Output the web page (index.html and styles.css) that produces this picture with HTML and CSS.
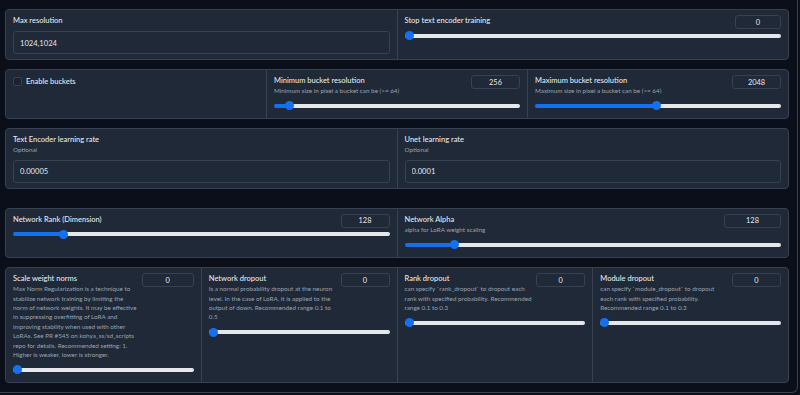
FILE: index.html
```html
<!DOCTYPE html>
<html lang="en">

<head>
   <meta charset="UTF-8">
   <meta name="viewport" content="width=device-width, initial-scale=1.0">
   <title>LoRA training parameters</title>
   <link rel="stylesheet" href="styles.css">
</head>

<body>
   <div class="tab">

      <div class="form form--2">
         <div class="field">
            <div class="field__head">
               <span class="field__label">Max resolution</span>
            </div>
            <input class="field__input" type="text" value="1024,1024">
         </div>
         <div class="field">
            <div class="slider__head">
               <div class="slider__text">
                  <span class="field__label">Stop text encoder training</span>
               </div>
               <input class="slider__num slider__num--sm" type="text" value="0">
            </div>
            <input class="slider__range" type="range" min="0" max="100" value="0" style="--fill: 0%">
         </div>
      </div>

      <div class="form form--3">
         <div class="field">
            <label class="check">
               <span class="check__box"></span>
               <span class="field__label">Enable buckets</span>
            </label>
         </div>
         <div class="field">
            <div class="slider__head">
               <div class="slider__text">
                  <span class="field__label">Minimum bucket resolution</span>
                  <span class="field__info">Minimum size in pixel a bucket can be (&gt;= 64)</span>
               </div>
               <input class="slider__num" type="text" value="256">
            </div>
            <input class="slider__range" type="range" min="64" max="4096" value="256" style="--fill: 4.8%">
         </div>
         <div class="field">
            <div class="slider__head">
               <div class="slider__text">
                  <span class="field__label">Maximum bucket resolution</span>
                  <span class="field__info">Maximum size in pixel a bucket can be (&gt;= 64)</span>
               </div>
               <input class="slider__num" type="text" value="2048">
            </div>
            <input class="slider__range" type="range" min="64" max="4096" value="2048" style="--fill: 49.2%">
         </div>
      </div>

      <div class="form form--2">
         <div class="field">
            <div class="field__head">
               <span class="field__label">Text Encoder learning rate</span>
               <span class="field__info">Optional</span>
            </div>
            <input class="field__input" type="text" value="0.00005">
         </div>
         <div class="field">
            <div class="field__head">
               <span class="field__label">Unet learning rate</span>
               <span class="field__info">Optional</span>
            </div>
            <input class="field__input" type="text" value="0.0001">
         </div>
      </div>

      <div class="form form--2 form--spaced">
         <div class="field">
            <div class="slider__head">
               <div class="slider__text">
                  <span class="field__label">Network Rank (Dimension)</span>
               </div>
               <input class="slider__num" type="text" value="128">
            </div>
            <input class="slider__range" type="range" min="1" max="1024" value="128" style="--fill: 12.4%">
         </div>
         <div class="field">
            <div class="slider__head">
               <div class="slider__text">
                  <span class="field__label">Network Alpha</span>
                  <span class="field__info">alpha for LoRA weight scaling</span>
               </div>
               <input class="slider__num slider__num--lg" type="text" value="128">
            </div>
            <input class="slider__range" type="range" min="1" max="1024" value="128" style="--fill: 12.4%">
         </div>
      </div>

      <div class="form form--4">
         <div class="field">
            <div class="slider__head">
               <div class="slider__text">
                  <span class="field__label">Scale weight norms</span>
                  <span class="field__info">Max Norm Regularization is a technique to<br>stabilize network training by limiting the<br>norm of network weights. It may be effective<br>in suppressing overfitting of LoRA and<br>improving stability when used with other<br>LoRAs. See PR #545 on kohya_ss/sd_scripts<br>repo for details. Recommended setting: 1.<br>Higher is weaker, lower is stronger.</span>
               </div>
               <input class="slider__num slider__num--md" type="text" value="0">
            </div>
            <input class="slider__range" type="range" min="0" max="10" value="0" style="--fill: 0%">
         </div>
         <div class="field">
            <div class="slider__head">
               <div class="slider__text">
                  <span class="field__label">Network dropout</span>
                  <span class="field__info">Is a normal probability dropout at the neuron<br>level. In the case of LoRA, it is applied to the<br>output of down. Recommended range 0.1 to<br>0.5</span>
               </div>
               <input class="slider__num" type="text" value="0">
            </div>
            <input class="slider__range" type="range" min="0" max="1" step="0.01" value="0" style="--fill: 0%">
         </div>
         <div class="field">
            <div class="slider__head">
               <div class="slider__text">
                  <span class="field__label">Rank dropout</span>
                  <span class="field__info">can specify `rank_dropout` to dropout each<br>rank with specified probability. Recommended<br>range 0.1 to 0.3</span>
               </div>
               <input class="slider__num" type="text" value="0">
            </div>
            <input class="slider__range" type="range" min="0" max="1" step="0.01" value="0" style="--fill: 0%">
         </div>
         <div class="field">
            <div class="slider__head">
               <div class="slider__text">
                  <span class="field__label">Module dropout</span>
                  <span class="field__info">can specify `module_dropout` to dropout<br>each rank with specified probability.<br>Recommended range 0.1 to 0.3</span>
               </div>
               <input class="slider__num" type="text" value="0">
            </div>
            <input class="slider__range" type="range" min="0" max="1" step="0.01" value="0" style="--fill: 0%">
         </div>
      </div>

   </div>
</body>

</html>
```

FILE: styles.css
```css
*,
*::before,
*::after {
   box-sizing: border-box;
}

html,
body {
   margin: 0;
   padding: 0;
   background-color: #0b0f19;
   font-family: Lato, "Noto Sans", sans-serif;
   color: #e5e7eb;
   overflow: hidden;
}

.tab {
   width: 798px;
   height: 393px;
   padding: 9px 8px 0 5px;
   border-right: 1px solid #374151;
   border-bottom: 1px solid #374151;
   border-bottom-right-radius: 6px;

   display: flex;
   flex-direction: column;
   gap: 9px;
}

/* a row of blocks sharing one panel, 1px lines between them */
.form {
   display: grid;
   gap: 1px;
   background-color: #374151;
   border: 1px solid #374151;
   border-radius: 4px;
   overflow: hidden;
}

.form--2 {
   grid-template-columns: repeat(2, 1fr);
}

.form--3 {
   grid-template-columns: repeat(3, 1fr);
}

.form--4 {
   grid-template-columns: repeat(4, 1fr);
}

.form--spaced {
   margin-top: 10px;
}

.field {
   background-color: #1f2937;
   padding: 5px 7px;
   min-width: 0;
}

.field__head {
   display: flex;
   flex-direction: column;
   margin-bottom: 5px;
}

.field__label {
   display: block;
   font-size: 7.5px;
   line-height: 11px;
   font-weight: 500;
   color: #e5e7eb;
}

.field__info {
   display: block;
   font-size: 6.3px;
   line-height: 9.4px;
   color: #9ca3af;
}

.field__input {
   display: block;
   width: 100%;
   height: 23px;
   margin: 0;
   padding: 0 6px;
   border: 1px solid #374151;
   border-radius: 3px;
   background-color: #1f2937;
   color: #e5e7eb;
   font-family: inherit;
   font-size: 7.6px;
   outline: none;
}

/* checkbox */
.check {
   display: flex;
   align-items: center;
   gap: 4px;
   height: 12px;
}

.check__box {
   width: 9px;
   height: 9px;
   border: 1px solid #374151;
   border-radius: 2px;
   background-color: #1b2331;
}

/* slider */
.slider__head {
   display: flex;
   justify-content: space-between;
   align-items: flex-start;
   gap: 2px;
}

.slider__text {
   flex: 1;
   min-width: 0;
}

.slider__text .field__info {
   margin-bottom: 4px;
}

.slider__num {
   flex: none;
   width: 49px;
   height: 14px;
   margin: 0;
   padding: 0;
   border: 1px solid #374151;
   border-radius: 3px;
   background-color: #1f2937;
   color: #e5e7eb;
   font-family: inherit;
   font-size: 7.4px;
   text-align: center;
   outline: none;
}

.slider__num--sm {
   width: 46px;
}

.slider__num--md {
   width: 52px;
}

.slider__num--lg {
   width: 57px;
}

.slider__range {
   -webkit-appearance: none;
   appearance: none;
   display: block;
   width: 100%;
   height: 9px;
   margin: 2px 0 3px;
   background: transparent;
}

.slider__range::-webkit-slider-runnable-track {
   height: 4px;
   border-radius: 2px;
   background: linear-gradient(to right, #1570ef var(--fill), #e5e7eb var(--fill));
}

.slider__range::-webkit-slider-thumb {
   -webkit-appearance: none;
   width: 9px;
   height: 9px;
   margin-top: -2.5px;
   border: none;
   border-radius: 50%;
   background-color: #1570ef;
}
```
